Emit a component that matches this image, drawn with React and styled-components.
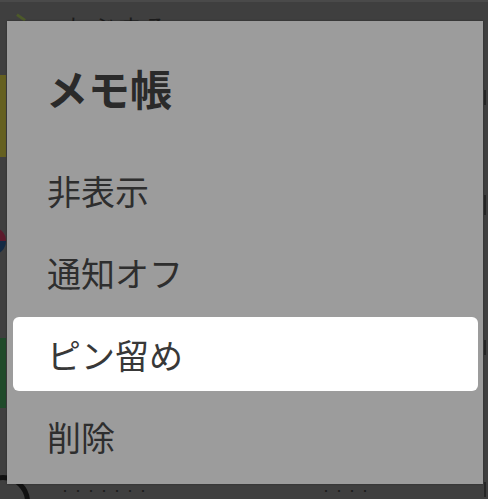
import styled, { createGlobalStyle } from "styled-components";

const GlobalStyle = createGlobalStyle`
  html, body {
    margin: 0;
    padding: 0;
    background: #3f3f3f;
  }
  body {
    font-family: "Noto Sans CJK JP", "Noto Sans", sans-serif;
  }
`;

const Screen = styled.div`
  position: relative;
  width: 488px;
  height: 499px;
  overflow: hidden;
  background: #3f3f3f;
`;

/* the chat list lying under the dimmed overlay */
const Underlay = styled.div`
  display: flex;
  flex-direction: column;
  height: 100%;
  border-top: 2px solid #4a4a4a;
  box-sizing: border-box;
`;

const TopRow = styled.div`
  display: flex;
  align-items: flex-start;
  gap: 40px;
  padding: 12px 0 0 16px;
  height: 22px;
  color: #1c1c1c;
  font-size: 22px;
  line-height: 22px;
  letter-spacing: 4px;
  white-space: nowrap;
`;

const Pencil = styled.span`
  width: 10px;
  height: 3px;
  background: #4d5a2a;
  transform: rotate(35deg);
  margin-top: 2px;
`;

const Row = styled.div`
  display: flex;
  align-items: flex-start;
  height: ${p => p.h}px;
`;

const Thumb = styled.div`
  width: 40px;
  margin-left: -34px;
  height: ${p => p.h}px;
  margin-top: ${p => p.top || 0}px;
  background: ${p => p.bg};
  border-radius: ${p => p.round || 0}px;
`;

const BottomRow = styled.div`
  display: flex;
  align-items: flex-start;
  gap: 170px;
  padding: 0 0 3px 60px;
  margin-top: auto;
  color: #1c1c1c;
  font-size: 10px;
  line-height: 10px;
  letter-spacing: 3px;
  white-space: nowrap;
`;

const Ring = styled.div`
  position: absolute;
  left: -24px;
  bottom: -30px;
  width: 44px;
  height: 44px;
  border: 5px solid #111;
  border-radius: 50%;
`;

const Tick = styled.div`
  position: absolute;
  right: 2px;
  top: ${p => p.top}px;
  width: 2px;
  height: ${p => p.h}px;
  background: #262626;
`;

const Dialog = styled.div`
  position: absolute;
  left: 7px;
  top: 21px;
  width: 476px;
  height: 463px;
  box-sizing: border-box;
  background: #9c9c9c;
  padding: 0 5px 11px 6px;
  display: flex;
  flex-direction: column;
  box-shadow: 0 0 2px rgba(0, 0, 0, 0.35);
`;

const Title = styled.div`
  height: 132px;
  display: flex;
  align-items: center;
  padding-left: 33px;
  font-size: 42px;
  font-weight: 700;
  color: #2a2a2a;
`;

const Menu = styled.div`
  display: flex;
  flex-direction: column;
  gap: 8px;
`;

const Item = styled.div`
  height: 74px;
  display: flex;
  align-items: center;
  padding-left: 34px;
  font-size: 34px;
  color: ${p => (p.active ? "#383838" : "#2e2e2e")};
  background: ${p => (p.active ? "#ffffff" : "transparent")};
  border-radius: 6px;
`;

const items = ["非表示", "通知オフ", "ピン留め", "削除"];

export default function App() {
  return (
    <Screen>
      <GlobalStyle />
      <Underlay>
        <TopRow>
          <Pencil />
          <span>ねぶする</span>
        </TopRow>
        <Row h={128}>
          <Thumb bg="#656020" h={82} top={39} />
        </Row>
        <Row h={108}>
          <Thumb bg="linear-gradient(#5c1a2c 0 50%, #142a44 50%)" h={28} top={63} round={14} />
        </Row>
        <Row h={125}>
          <Thumb bg="#1f4a2a" h={70} top={66} />
        </Row>
        <BottomRow>
          <span>・・・・・・・</span>
          <span>・・・・</span>
        </BottomRow>
      </Underlay>
      <Ring />
      <Tick top={90} h={15} />
      <Tick top={195} h={20} />
      <Tick top={340} h={15} />
      <Tick top={482} h={15} />

      <Dialog>
        <Title>メモ帳</Title>
        <Menu>
          {items.map(label => (
            <Item key={label} active={label === "ピン留め"}>
              {label}
            </Item>
          ))}
        </Menu>
      </Dialog>
    </Screen>
  );
}
